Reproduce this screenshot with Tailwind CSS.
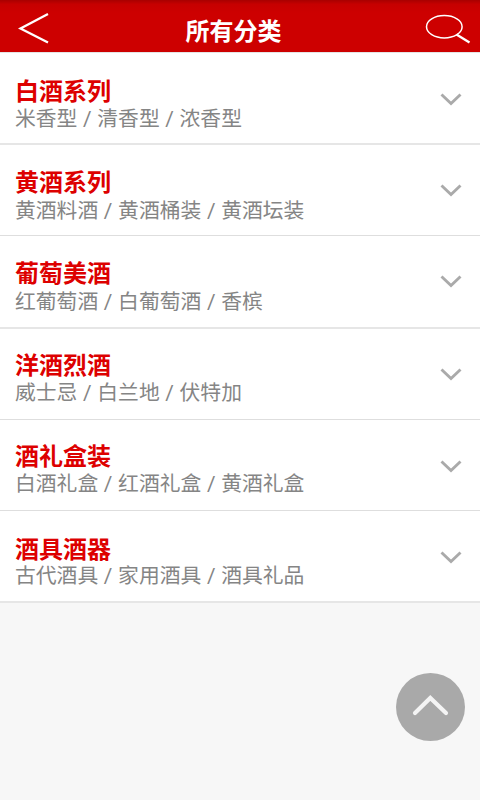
<!DOCTYPE html>
<html lang="zh-CN">
<head>
<meta charset="utf-8">
<title>所有分类</title>
<script src="https://cdn.jsdelivr.net/npm/@tailwindcss/browser@4"></script>
</head>
<body class="w-[480px] h-[800px] overflow-hidden bg-[#f7f7f7] font-['Roboto','Noto_Sans_CJK_SC',sans-serif]">
<svg class="hidden"><symbol id="down" viewBox="0 0 22 14"><path d="M1.500 1.500L11 10.500L20.500 1.500" fill="none" stroke="#aaa" stroke-width="2.900"/></symbol></svg>
<header class="h-[52px] bg-linear-to-b from-[#a80000] from-0% via-[#c60000] via-8% to-[#cd0000] to-25% grid grid-cols-[80px_1fr_80px]">
  <svg class="w-20 h-[52px]" viewBox="0 0 80 52" fill="none" stroke="#fff" stroke-width="2.300"><path d="M48 14L20.500 28.500L48 42.500"/></svg>
  <h1 class="text-center text-white text-[24px] font-bold leading-[64px] pr-[13px]">所有分类</h1>
  <svg class="w-20 h-[52px]" viewBox="0 0 80 52" fill="none" stroke="#fff"><ellipse cx="44.300" cy="26.700" rx="17.800" ry="11.200" stroke-width="1.500"/><path d="M56.500 34.500L69.500 42.500" stroke-width="2.400"/></svg>
</header>
<main class="bg-white border-t border-[#e4e4e4]">
  <section class="h-[92px] border-b-2 border-[#e6e6e6] flex justify-between pl-[15px] pr-[18px]">
    <div class="pt-[25px]"><h2 class="text-[24px] leading-[28px] font-bold text-[#dd0000]">白酒系列</h2><p class="text-[20.8px] leading-[26px] text-[#858585] [word-spacing:0.5px]">米香型 / 清香型 / 浓香型</p></div>
    <svg class="w-[22px] h-[14px] mt-[40px]"><use href="#down"/></svg>
  </section>
  <section class="h-[91px] border-b border-[#dedede] flex justify-between pl-[15px] pr-[18px]">
    <div class="pt-[24px]"><h2 class="text-[24px] leading-[28px] font-bold text-[#dd0000]">黄酒系列</h2><p class="text-[20.8px] leading-[28px] text-[#858585] [word-spacing:0.5px]">黄酒料酒 / 黄酒桶装 / 黄酒坛装</p></div>
    <svg class="w-[22px] h-[14px] mt-[39px]"><use href="#down"/></svg>
  </section>
  <section class="h-[93px] border-b-2 border-[#e6e6e6] flex justify-between pl-[15px] pr-[18px]">
    <div class="pt-[24px]"><h2 class="text-[24px] leading-[28px] font-bold text-[#dd0000]">葡萄美酒</h2><p class="text-[20.8px] leading-[28px] text-[#858585] [word-spacing:0.5px]">红葡萄酒 / 白葡萄酒 / 香槟</p></div>
    <svg class="w-[22px] h-[14px] mt-[39px]"><use href="#down"/></svg>
  </section>
  <section class="h-[91px] border-b border-[#dedede] flex justify-between pl-[15px] pr-[18px]">
    <div class="pt-[23px]"><h2 class="text-[24px] leading-[28px] font-bold text-[#dd0000]">洋酒烈酒</h2><p class="text-[20.8px] leading-[26px] text-[#858585] [word-spacing:0.5px]">威士忌 / 白兰地 / 伏特加</p></div>
    <svg class="w-[22px] h-[14px] mt-[39px]"><use href="#down"/></svg>
  </section>
  <section class="h-[91px] border-b border-[#dedede] flex justify-between pl-[15px] pr-[18px]">
    <div class="pt-[23px]"><h2 class="text-[24px] leading-[28px] font-bold text-[#dd0000]">酒礼盒装</h2><p class="text-[20.8px] leading-[27px] text-[#858585] [word-spacing:0.5px]">白酒礼盒 / 红酒礼盒 / 黄酒礼盒</p></div>
    <svg class="w-[22px] h-[14px] mt-[40px]"><use href="#down"/></svg>
  </section>
  <section class="h-[92px] border-b-2 border-[#e6e6e6] flex justify-between pl-[15px] pr-[18px]">
    <div class="pt-[25px]"><h2 class="text-[24px] leading-[28px] font-bold text-[#dd0000]">酒具酒器</h2><p class="text-[20.8px] leading-[25px] text-[#858585] [word-spacing:0.5px]">古代酒具 / 家用酒具 / 酒具礼品</p></div>
    <svg class="w-[22px] h-[14px] mt-[40px]"><use href="#down"/></svg>
  </section>
</main>
<button aria-label="返回顶部" class="absolute left-[396px] top-[673px] w-[69px] h-[68px]"><svg class="w-full h-full" viewBox="0 0 69 68"><ellipse cx="34.500" cy="34" rx="34.500" ry="34" fill="#a9a9a9"/><path d="M19 40L34.300 25L50 40" fill="none" stroke="#f4f4f4" stroke-width="4.200" stroke-linecap="round"/></svg></button>
</body>
</html>
